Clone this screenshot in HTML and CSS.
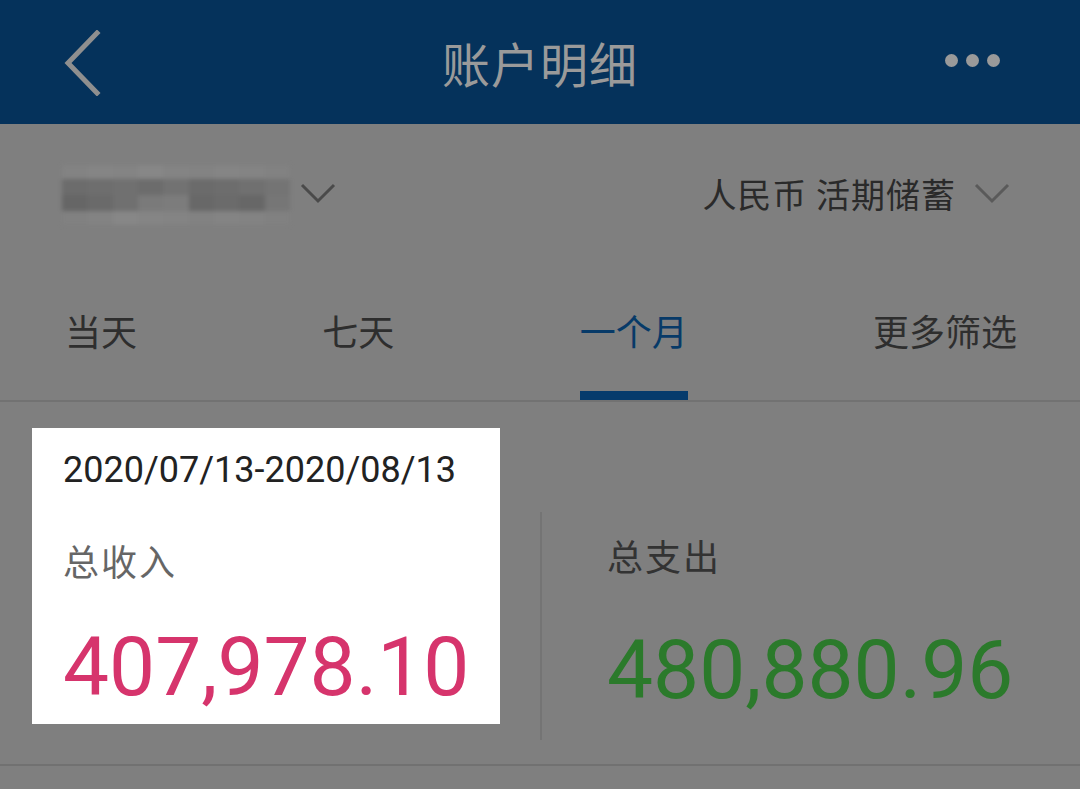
FILE: index.html
```html
<!DOCTYPE html>
<html lang="zh-CN">
<head>
  <meta charset="UTF-8">
  <meta name="viewport" content="width=device-width, initial-scale=1.0">
  <title>账户明细</title>
  <link rel="stylesheet" href="styles.css">
</head>
<body>
  <div class="app">
    <header class="topbar">
      <div class="topbar-side">
        <svg class="back-icon" width="40" height="66" viewBox="0 0 40 66">
          <polyline points="35,3 6,33 35,63" fill="none" stroke="#8f8f8f" stroke-width="5" stroke-linecap="square"/>
        </svg>
      </div>
      <h1 class="topbar-title">账户明细</h1>
      <div class="topbar-side topbar-right">
        <span class="dot"></span><span class="dot"></span><span class="dot"></span>
      </div>
    </header>

    <div class="account-row">
      <div class="account-picker">
        <!-- masked card number -->
        <div class="masked">
          <div class="masked-row faint">
            <i style="background:#858585"></i><i style="background:#888"></i><i style="background:#868686"></i><i style="background:#8a8a8a"></i><i style="background:#878787"></i><i style="background:#858585"></i><i style="background:#888"></i><i style="background:#868686"></i><i style="background:#838383"></i>
          </div>
          <div class="masked-row">
            <i style="background:#6c6c6c"></i><i style="background:#6e6e6e"></i><i style="background:#707070"></i><i style="background:#6c6c6c"></i><i style="background:#727272"></i><i style="background:#6b6b6b"></i><i style="background:#6d6d6d"></i><i style="background:#707070"></i><i style="background:#747474"></i>
          </div>
          <div class="masked-row">
            <i style="background:#666"></i><i style="background:#6a6a6a"></i><i style="background:#707070"></i><i style="background:#7a7a7a"></i><i style="background:#7c7c7c"></i><i style="background:#686868"></i><i style="background:#6b6b6b"></i><i style="background:#676767"></i><i style="background:#767676"></i>
          </div>
          <div class="masked-row faint">
            <i style="background:#828282"></i><i style="background:#858585"></i><i style="background:#8a8a8a"></i><i style="background:#888"></i><i style="background:#868686"></i><i style="background:#838383"></i><i style="background:#878787"></i><i style="background:#858585"></i><i style="background:#828282"></i>
          </div>
        </div>
        <svg class="chevron" width="36" height="22" viewBox="0 0 36 22">
          <polyline points="2,2 18,18 34,2" fill="none" stroke="#4a4a4a" stroke-width="3"/>
        </svg>
      </div>
      <div class="account-type">
        <span>人民币 活期储蓄</span>
        <svg class="chevron" width="36" height="22" viewBox="0 0 36 22">
          <polyline points="2,2 18,18 34,2" fill="none" stroke="#5a5a5a" stroke-width="3"/>
        </svg>
      </div>
    </div>

    <nav class="tabs">
      <span class="tab">当天</span>
      <span class="tab">七天</span>
      <span class="tab active">一个月</span>
      <span class="tab">更多筛选</span>
    </nav>

    <section class="summary">
      <div class="summary-cell income">
        <div class="date-range">2020/07/13-2020/08/13</div>
        <div class="label">总收入</div>
        <div class="amount">407,978.10</div>
      </div>
      <div class="summary-cell expense">
        <div class="label">总支出</div>
        <div class="amount">480,880.96</div>
      </div>
    </section>
  </div>
</body>
</html>
```

FILE: styles.css
```css
body {
  margin: 0;
  padding: 0;
  background: #7f7f7f;
  font-family: Roboto, "Noto Sans CJK SC", sans-serif;
  color: #2e2e2e;
}
.app {
  width: 1080px;
  height: 789px;
  overflow: hidden;
}

/* top bar */
.topbar {
  height: 124px;
  background: #05325b;
  display: flex;
  align-items: center;
}
.topbar-side {
  width: 200px;
  display: flex;
  align-items: center;
}
.back-icon { margin-left: 62px; margin-top: 2px; }
.topbar-title {
  flex: 1;
  margin: 0;
  text-align: center;
  font-family: "Noto Sans CJK SC", sans-serif;
  font-weight: 400;
  font-size: 48px;
  color: #9a9a9a;
  letter-spacing: 1px;
}
.topbar-right {
  justify-content: flex-end;
  padding-right: 80px;
  box-sizing: border-box;
  gap: 8px;
  margin-top: -3px;
}
.dot {
  width: 13px;
  height: 13px;
  border-radius: 50%;
  background: #9a9a9a;
}

/* account selector */
.account-row {
  height: 138px;
  display: flex;
  align-items: center;
  justify-content: space-between;
  padding: 0 70px 0 62px;
  font-family: "Noto Sans CJK SC", sans-serif;
}
.account-picker, .account-type {
  display: flex;
  align-items: center;
}
.masked {
  width: 228px;
  filter: blur(2px);
  margin-top: 4px;
}
.masked-row {
  display: flex;
  height: 16px;
}
.masked-row.faint { height: 14px; opacity: 0.7; }
.masked-row i {
  flex: 1;
}
.account-picker .chevron { margin-left: 10px; margin-top: 2px; }
.account-type span {
  font-size: 34px;
  color: #2a2a2a;
  letter-spacing: 1px;
}
.account-type .chevron { margin-left: 18px; margin-top: 2px; }

/* period tabs */
.tabs {
  height: 138px;
  display: flex;
  justify-content: space-between;
  padding: 0 63px 0 65px;
  border-bottom: 2px solid #727272;
  font-family: "Noto Sans CJK SC", sans-serif;
}
.tab {
  display: flex;
  align-items: center;
  padding-top: 6px;
  font-size: 36px;
  color: #2e2e2e;
  border-bottom: 9px solid transparent;
}
.tab.active {
  color: #073a68;
  border-bottom-color: #063b6c;
}

/* income / expense summary */
.summary {
  height: 364px;
  display: flex;
  border-bottom: 2px solid #717171;
  box-sizing: border-box;
}
.summary-cell .label {
  font-family: "Noto Sans CJK SC", sans-serif;
  font-size: 36px;
  line-height: 1;
  letter-spacing: 2px;
}
.summary-cell .amount {
  font-size: 82px;
  line-height: 1;
}
.income {
  margin: 26px 0 0 32px;
  width: 468px;
  height: 296px;
  box-sizing: border-box;
  padding: 21px 0 0 31px;
  background: #fff;
}
.date-range {
  font-size: 36px;
  color: #222;
  line-height: 1.2;
}
.income .label {
  margin-top: 50px;
  color: #666;
}
.income .amount {
  margin-top: 48px;
  color: #d6346c;
}
.expense {
  margin: 110px 0 0 40px;
  height: 228px;
  box-sizing: border-box;
  border-left: 2px solid #747474;
  padding: 25px 0 0 65px;
}
.expense .label { color: #333; }
.expense .amount {
  margin-top: 56px;
  color: #2b7a2b;
}
```
